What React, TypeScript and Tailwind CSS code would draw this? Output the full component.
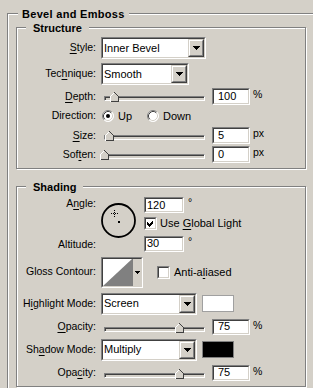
import type { ReactNode } from 'react'

const sunkenOuter = 'border border-t-[#808080] border-l-[#808080] border-b-white border-r-white'
const sunkenInner = 'border border-t-[#404040] border-l-[#404040] border-b-[#d4d0c8] border-r-[#d4d0c8]'

function Mn({ children }: { children: ReactNode }) {
  return <span className="underline underline-offset-[2px]">{children}</span>
}

function Group({ title, children, className = '' }: { title: string; children: ReactNode; className?: string }) {
  return (
    <div className={`w-[290px] border border-[#808080] shadow-[inset_1px_1px_0_#fff,1px_1px_0_#fff] ${className}`}>
      <div className="-mt-[7px] ml-[9px] h-[14px] w-fit bg-[#d4d0c8] px-[7px] text-[11px] font-bold leading-[14px]">{title}</div>
      {children}
    </div>
  )
}

function Label({ children }: { children: ReactNode }) {
  return <span className="w-[84px] shrink-0 pr-[5px] text-right">{children}</span>
}

function DropButton() {
  return (
    <div className="flex h-full w-[16px] shrink-0 border border-t-[#d4d0c8] border-l-[#d4d0c8] border-b-[#404040] border-r-[#404040]">
      <div className="flex flex-1 items-center justify-center border border-t-white border-l-white border-b-[#808080] border-r-[#808080] bg-[#d4d0c8]">
        <svg width="7" height="4" viewBox="0 0 7 4" shapeRendering="crispEdges">
          <path d="M0 0h7v1h-1v1h-1v1h-1v1h-1v-1h-1v-1h-1v-1h-1z" fill="#000" />
        </svg>
      </div>
    </div>
  )
}

function Select({ value, width }: { value: string; width: string }) {
  return (
    <div className={`h-[22px] shrink-0 ${width} ${sunkenOuter}`}>
      <div className={`flex h-full bg-white ${sunkenInner}`}>
        <span className="flex-1 self-center pl-[1px] text-[11px] leading-none">{value}</span>
        <DropButton />
      </div>
    </div>
  )
}

function Field({ value, width = 'w-[38px]', height = 'h-[17px]', pad = 'pl-[4px]' }: { value: string; width?: string; height?: string; pad?: string }) {
  return (
    <div className={`shrink-0 ${width} ${height} ${sunkenOuter}`}>
      <div className={`flex h-full items-center bg-white text-[11px] leading-none ${pad} ${sunkenInner}`}>{value}</div>
    </div>
  )
}

function Thumb({ left }: { left: number }) {
  return (
    <svg className="absolute top-0" style={{ left }} width="9" height="10" viewBox="0 0 9 10" shapeRendering="crispEdges">
      <path d="M0 10V4.5L4.5 0L9 4.5V10Z" fill="#d4d0c8" />
      <path d="M0.5 9.5V4.5L4.5 0.5" fill="none" stroke="#fff" />
      <path d="M4.5 0.5L8.5 4.5V9.5H0.5" fill="none" stroke="#404040" />
    </svg>
  )
}

function Slider({ pos, track = 3 }: { pos: number; track?: number }) {
  return (
    <div className="relative mt-[4px] h-[10px] w-[104px] shrink-0 self-start">
      <div className={`absolute top-[4px] right-0 h-[5px] ${sunkenOuter}`} style={{ left: track }}>
        <div className="h-full border-t border-l border-[#404040] bg-[#d4d0c8]" />
      </div>
      <Thumb left={pos} />
    </div>
  )
}

function Unit({ children }: { children: ReactNode }) {
  return <span className="ml-[3px] self-start leading-[12px]">{children}</span>
}

function Radio({ checked }: { checked?: boolean }) {
  return (
    <svg width="12" height="12" viewBox="0 0 12 12" className="shrink-0">
      <circle cx="6" cy="6" r="5.5" fill="#fff" />
      <path d="M2.11 9.89A5.5 5.5 0 0 1 9.89 2.11" fill="none" stroke="#808080" />
      <path d="M9.89 2.11A5.5 5.5 0 0 1 2.11 9.89" fill="none" stroke="#fff" />
      <path d="M2.82 9.18A4.5 4.5 0 0 1 9.18 2.82" fill="none" stroke="#404040" />
      <path d="M9.18 2.82A4.5 4.5 0 0 1 2.82 9.18" fill="none" stroke="#d4d0c8" />
      {checked && <circle cx="6" cy="6" r="2" fill="#000" />}
    </svg>
  )
}

function Check({ checked }: { checked?: boolean }) {
  return (
    <div className={`h-[13px] w-[13px] shrink-0 ${sunkenOuter}`}>
      <div className={`flex h-full items-center justify-center bg-white ${sunkenInner}`}>
        {checked && (
          <svg width="7" height="7" viewBox="0 0 7 7" shapeRendering="crispEdges">
            <path d="M0 2L2 4L6 0V3L2 7L0 5Z" fill="#000" />
          </svg>
        )}
      </div>
    </div>
  )
}

function AngleDial() {
  return (
    <svg width="36" height="36" viewBox="0 0 36 36">
      <circle cx="17.5" cy="17.5" r="16.5" fill="none" stroke="#000" strokeWidth="1.8" />
      <rect x="17" y="18" width="2" height="2" fill="#000" />
      <path d="M10 10.5h7M13.5 7v7" stroke="#000" strokeDasharray="1 1" shapeRendering="crispEdges" />
    </svg>
  )
}

function GlossContour() {
  return (
    <div className={`h-[31px] w-[42px] shrink-0 ${sunkenOuter}`}>
      <div className={`flex h-full bg-white ${sunkenInner}`}>
        <svg width="29" height="27" viewBox="0 0 29 27" className="shrink-0">
          <path d="M0 27L29 0V27Z" fill="#808080" />
        </svg>
        <div className="flex flex-1 items-center justify-center border-l border-[#808080] bg-[#d4d0c8]">
          <svg width="5" height="3" viewBox="0 0 5 3" shapeRendering="crispEdges">
            <path d="M0 0h5v1h-1v1h-1v1h-1v-1h-1v-1h-1z" fill="#000" />
          </svg>
        </div>
      </div>
    </div>
  )
}

export default function App() {
  return (
    <div className="h-[388px] w-[313px] overflow-hidden bg-[#d4d0c8] pt-[13px] font-['Liberation_Sans',Arial,sans-serif] text-[10.5px] text-black">
      <div className="ml-[7px] h-[400px] w-[320px] border-t border-l border-[#808080] shadow-[inset_1px_1px_0_#fff]">
        <div className="-mt-[7px] ml-[10px] h-[14px] w-fit bg-[#d4d0c8] px-[4px] text-[11px] font-bold leading-[14px] tracking-[0.3px]">Bevel and Emboss</div>

        <Group title="Structure" className="mt-[6px] ml-[8px] pb-[5px]">
          <div className="mt-[2px] flex items-center">
            <Label><Mn>S</Mn>tyle:</Label>
            <Select value="Inner Bevel" width="w-[105px]" />
          </div>
          <div className="mt-[4px] flex items-center">
            <Label>Tec<Mn>h</Mn>nique:</Label>
            <Select value="Smooth" width="w-[88px]" />
          </div>
          <div className="mt-[3px] flex h-[17px] items-center">
            <Label><Mn>D</Mn>epth:</Label>
            <Slider pos={9} />
            <div className="ml-[7px] flex">
              <Field value="100" />
              <Unit>%</Unit>
            </div>
          </div>
          <div className="flex h-[22px] items-center">
            <Label>Direction:</Label>
            <div className="ml-[1px] flex w-[45px] items-center">
              <Radio checked />
              <span className="ml-[4px] text-[11px]">Up</span>
            </div>
            <Radio />
            <span className="ml-[4px] text-[11px]">Down</span>
          </div>
          <div className="flex h-[17px] items-center">
            <Label><Mn>S</Mn>ize:</Label>
            <Slider pos={4} />
            <div className="ml-[7px] flex">
              <Field value="5" />
              <Unit>px</Unit>
            </div>
          </div>
          <div className="mt-[2px] flex h-[17px] items-center">
            <Label>Sof<Mn>t</Mn>en:</Label>
            <Slider pos={-1} track={-1} />
            <div className="ml-[7px] flex">
              <Field value="0" />
              <Unit>px</Unit>
            </div>
          </div>
        </Group>

        <Group title="Shading" className="mt-[17px] ml-[8px] pb-[5px]">
          <div className="mt-[3px] flex">
            <div className="flex w-[84px] shrink-0 flex-col justify-between pr-[5px] text-right">
              <div className="h-[16px] leading-[13px]">A<Mn>n</Mn>gle:</div>
              <div className="h-[16px] leading-[16px]">Altitude:</div>
            </div>
            <div className="pt-[6px]">
              <AngleDial />
            </div>
            <div className="ml-[7px] flex flex-col">
              <div className="flex">
                <Field value="120" width="w-[40px]" height="h-[16px]" pad="pl-[1px]" />
                <span className="ml-[4px] leading-[10px]">°</span>
              </div>
              <div className="mt-[2px] flex items-center">
                <Check checked />
                <span className="ml-[3px] text-[11px]">Use <Mn>G</Mn>lobal Light</span>
              </div>
              <div className="mt-[4px] flex">
                <Field value="30" width="w-[40px]" height="h-[16px]" pad="pl-[1px]" />
                <span className="ml-[4px] leading-[10px]">°</span>
              </div>
            </div>
          </div>

          <div className="mt-[5px] flex items-center">
            <Label>Gloss Contour:</Label>
            <GlossContour />
            <div className="ml-[14px]">
              <Check />
            </div>
            <span className="ml-[4px] text-[11px]">Anti-a<Mn>l</Mn>iased</span>
          </div>

          <div className="mt-[5px] flex items-center">
            <Label>H<Mn>i</Mn>ghlight Mode:</Label>
            <Select value="Screen" width="w-[96px]" />
            <div className="ml-[5px] h-[17px] w-[32px] border border-[#a0a0a0] bg-white" />
          </div>
          <div className="mt-[4px] flex h-[16px] items-center">
            <Label><Mn>O</Mn>pacity:</Label>
            <Slider pos={74} />
            <div className="ml-[7px] flex">
              <Field value="75" height="h-[16px]" />
              <Unit>%</Unit>
            </div>
          </div>

          <div className="mt-[4px] flex items-center">
            <Label>Sh<Mn>a</Mn>dow Mode:</Label>
            <Select value="Multiply" width="w-[96px]" />
            <div className="ml-[5px] h-[17px] w-[32px] border border-[#808080] bg-black" />
          </div>
          <div className="mt-[4px] flex h-[16px] items-center">
            <Label>Opa<Mn>c</Mn>ity:</Label>
            <Slider pos={74} />
            <div className="ml-[7px] flex">
              <Field value="75" height="h-[16px]" />
              <Unit>%</Unit>
            </div>
          </div>
        </Group>
      </div>
    </div>
  )
}
